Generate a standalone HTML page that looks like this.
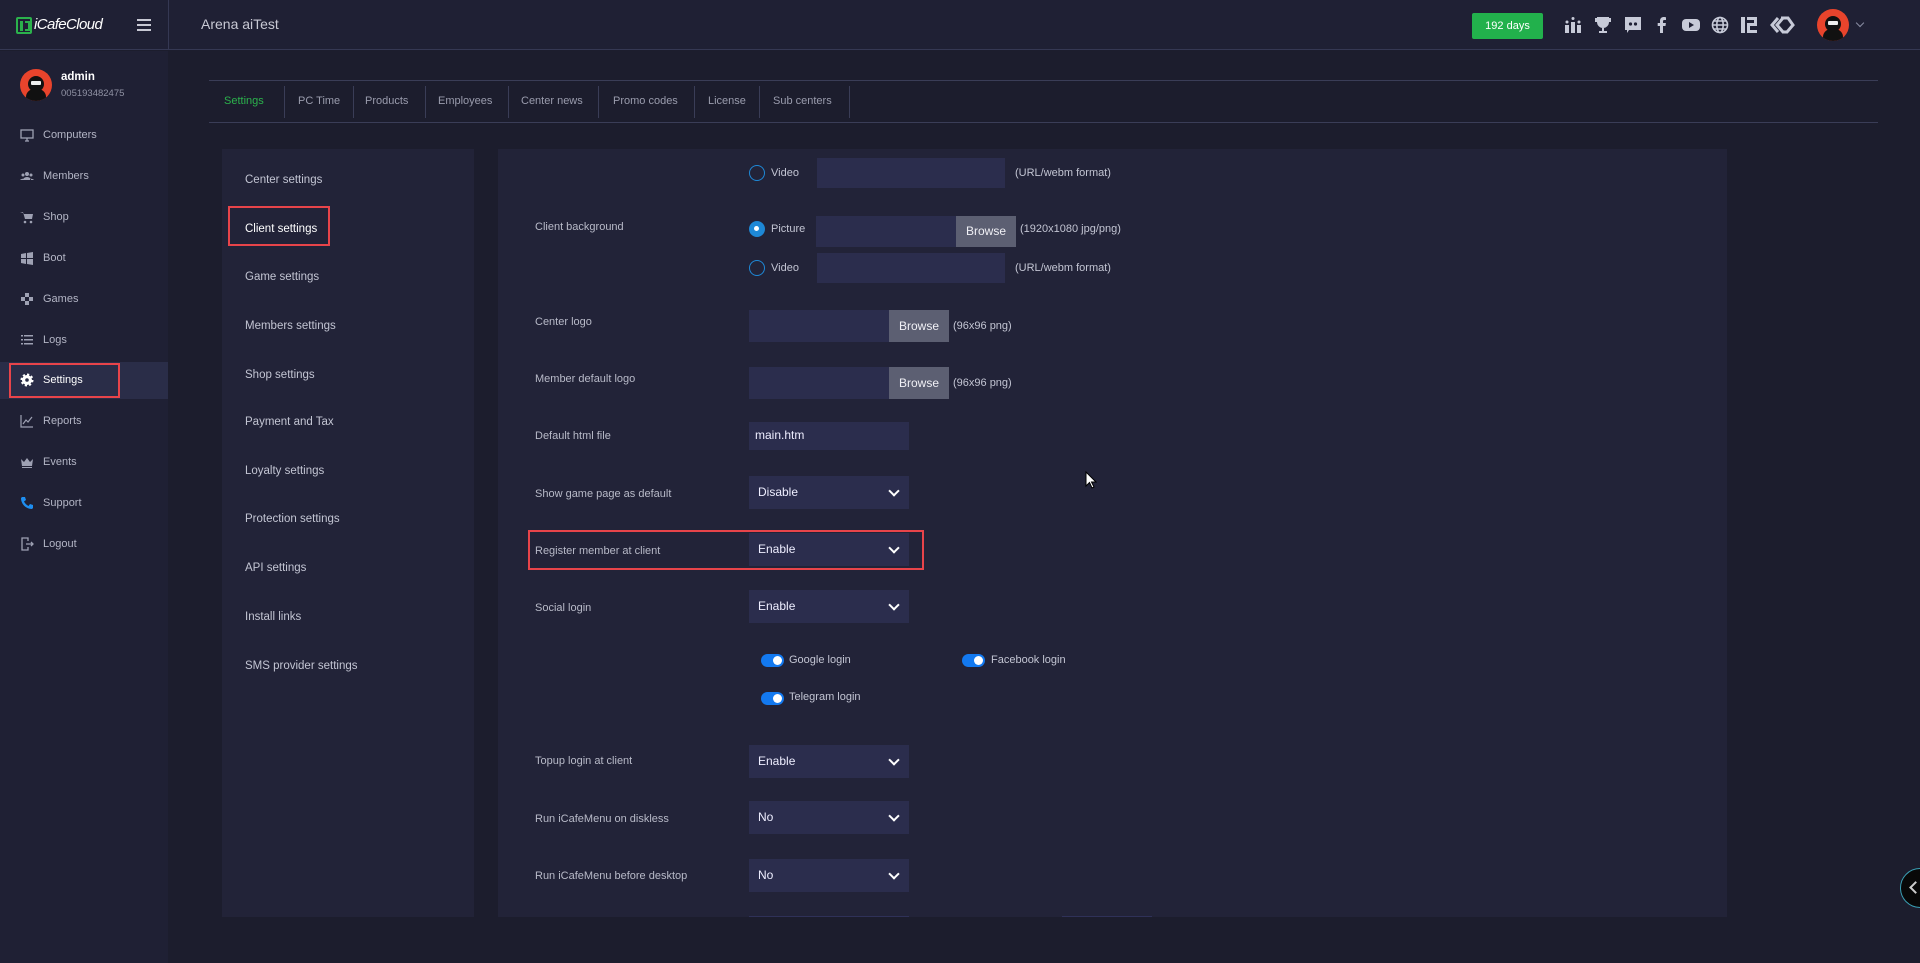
<!DOCTYPE html>
<html><head><meta charset="utf-8"><style>
*{box-sizing:border-box;margin:0;padding:0}
body{width:1920px;height:963px;background:#1c1d2d;font-family:"Liberation Sans",sans-serif;color:#c9cad6;position:relative;overflow:hidden;font-size:11px}
.a{position:absolute;white-space:nowrap}
.hdr{left:0;top:0;width:1920px;height:50px;background:#1f2034;border-bottom:1px solid #353853}
.side{left:0;top:51px;width:168px;height:912px;background:#1f2034}
.mi{left:20px;font-size:11px;color:#b3b5c5;display:flex;align-items:center;gap:9px;transform:translateY(-50%)}
.mi svg{width:14px;height:14px}
.tab{top:95px;font-size:11px;color:#9a9cad}
.sep{top:86px;width:1px;height:32px;background:#3a3d57}
.panel{background:#222338}
.li{left:245px;font-size:11.5px;color:#c3c5d3;transform:translateY(-50%)}
.lb{left:535px;font-size:11px;color:#b8bac8;transform:translateY(-50%)}
.inp{background:#2b2d4d;height:30px}
.sel{left:749px;width:160px;height:33px;background:#2b2d4d;color:#eef;font-size:12px;padding:0 0 0 9px;line-height:33px}
.sel:after{content:"";position:absolute;right:11px;top:11px;width:6px;height:6px;border-right:2px solid #fff;border-bottom:2px solid #fff;transform:rotate(45deg)}
.br{background:#5c5f72;color:#f0f0f5;font-size:12px;text-align:center;line-height:30px}
.rad{width:16px;height:16px;border-radius:50%;border:1.5px solid #1e88d6}
.tg{width:23px;height:13px;border-radius:7px;background:#1379f0}
.tg:after{content:"";position:absolute;right:2px;top:2px;width:9px;height:9px;border-radius:50%;background:#fff}
.tt{font-size:11px;color:#c3c5d3;transform:translateY(-50%)}
.ic{top:16px;width:18px;height:18px}
</style></head><body>
<div class="a hdr"></div>
<div class="a" style="left:168px;top:0;width:1px;height:50px;background:#353853"></div>
<div class="a" style="left:16px;top:17px;width:16px;height:17px;border:2px solid #2bb24c;border-radius:2px"></div>
<div class="a" style="left:20px;top:21px;width:3px;height:10px;background:#2bb24c"></div>
<div class="a" style="left:25px;top:21px;width:5px;height:10px;border:2px solid #2bb24c;border-left:none"></div>
<div class="a" style="left:34px;top:16px;font-size:15px;color:#fff;letter-spacing:-0.6px;font-style:italic">iCafeCloud</div>
<div class="a" style="left:137px;top:19px;width:14px;height:2px;background:#c8c9d4;box-shadow:0 5px 0 #c8c9d4,0 10px 0 #c8c9d4"></div>
<div class="a" style="left:201px;top:16px;font-size:14px;color:#c8c9d4">Arena aiTest</div>
<div class="a" style="left:1472px;top:13px;width:71px;height:26px;background:#22b14c;border-radius:2px;color:#fff;font-size:11px;text-align:center;line-height:26px">192 days</div>
<svg class="a ic" style="left:1564px" viewBox="0 0 18 18" fill="#c7cad8"><rect x="1" y="9" width="4" height="8"/><rect x="7" y="6" width="4" height="11"/><rect x="13" y="9" width="4" height="8"/><circle cx="3" cy="6" r="1.5"/><circle cx="9" cy="2.5" r="1.5"/><circle cx="15" cy="6" r="1.5"/></svg>
<svg class="a ic" style="left:1594px" viewBox="0 0 18 18" fill="#c7cad8"><path d="M3 1h12v5a6 6 0 0 1-12 0z M1 2h2v4H1z M15 2h2v4h-2z M8 11h2v4H8z M5 15h8v2H5z"/></svg>
<svg class="a ic" style="left:1624px" viewBox="0 0 18 18"><path d="M1 1h16v13H5l-2 3v-3H1z" fill="#c7cad8"/><circle cx="6.5" cy="8" r="1.6" fill="#1f2034"/><circle cx="11.5" cy="8" r="1.6" fill="#1f2034"/></svg>
<svg class="a ic" style="left:1653px" viewBox="0 0 18 18" fill="#c7cad8"><path d="M10 17V10h2.5l.4-3H10V5.3c0-.8.3-1.3 1.4-1.3H13V1.3C12.6 1.2 11.8 1 10.9 1 8.6 1 7 2.3 7 4.9V7H4.7v3H7v7z"/></svg>
<svg class="a ic" style="left:1682px" viewBox="0 0 18 18"><rect x="0" y="3" width="18" height="12" rx="4" fill="#c7cad8"/><path d="M7 6l5 3-5 3z" fill="#1f2034"/></svg>
<svg class="a ic" style="left:1711px" viewBox="0 0 18 18" fill="none" stroke="#c7cad8" stroke-width="1.6"><circle cx="9" cy="9" r="7.5"/><ellipse cx="9" cy="9" rx="3.2" ry="7.5"/><path d="M1.5 9h15M3 5h12M3 13h12"/></svg>
<svg class="a ic" style="left:1740px" viewBox="0 0 18 18" fill="#c7cad8"><rect x="1" y="1" width="4" height="16"/><path d="M7 1h10v9H10v4h7v3H7v-10h7V4H7z"/></svg>
<svg class="a" style="left:1769px;top:15px;width:26px;height:20px" viewBox="0 0 26 20" fill="none" stroke="#c7cad8" stroke-width="3"><path d="M9 3L3 10l6 7M14 3l-6 7 6 7M12 3h7l5 7-6 7h-5"/></svg>
<div class="a" style="left:1817px;top:9px;width:32px;height:32px;border-radius:50%;background:#e8442c;overflow:hidden"><div style="position:absolute;left:8px;top:7px;width:16px;height:16px;border-radius:50%;background:#111"></div><div style="position:absolute;left:11px;top:12px;width:10px;height:4px;background:#eee;border-radius:1px"></div><div style="position:absolute;left:6px;top:20px;width:20px;height:14px;border-radius:8px 8px 0 0;background:#111"></div></div>
<div class="a" style="left:1857px;top:20px;width:6px;height:6px;border-right:1.5px solid #8a8da3;border-bottom:1.5px solid #8a8da3;transform:rotate(45deg)"></div>

<div class="a side"></div>
<div class="a" style="left:20px;top:69px;width:32px;height:32px;border-radius:50%;background:#e8442c;overflow:hidden"><div style="position:absolute;left:8px;top:7px;width:16px;height:16px;border-radius:50%;background:#111"></div><div style="position:absolute;left:11px;top:12px;width:10px;height:4px;background:#eee;border-radius:1px"></div><div style="position:absolute;left:6px;top:20px;width:20px;height:14px;border-radius:8px 8px 0 0;background:#111"></div></div>
<div class="a" style="left:61px;top:71px;font-size:11.5px;font-weight:bold;color:#fff">admin</div>
<div class="a" style="left:61px;top:88px;font-size:9.5px;color:#9092a4">005193482475</div>
<div class="a" style="left:0;top:362px;width:168px;height:37px;background:#2a2d48"></div>
<div class="a" style="left:9px;top:363px;width:111px;height:35px;border:2px solid #e8444a"></div>
<div class="a mi" style="top:135px"><svg viewBox="0 0 14 14" fill="none" stroke="#9ea1b3" stroke-width="1.3"><rect x="1" y="2" width="12" height="8"/><path d="M5 13h4M7 10v3"/></svg>Computers</div>
<div class="a mi" style="top:176px"><svg viewBox="0 0 14 14" fill="#9ea1b3"><circle cx="7" cy="5" r="2"/><circle cx="3" cy="6" r="1.5"/><circle cx="11" cy="6" r="1.5"/><path d="M3 11a4 3 0 0 1 8 0zM0 11a3 2 0 0 1 4-1v1zM14 11a3 2 0 0 0-4-1v1z"/></svg>Members</div>
<div class="a mi" style="top:217px"><svg viewBox="0 0 14 14" fill="#9ea1b3"><path d="M0 2h3l2 7h7l1-5H4L3.5 3"/><circle cx="5" cy="12" r="1.3"/><circle cx="11" cy="12" r="1.3"/></svg>Shop</div>
<div class="a mi" style="top:258px"><svg viewBox="0 0 14 14" fill="#9ea1b3"><path d="M1 3l5-1v5H1zM7 2l6-1v6H7zM1 8h5v5l-5-1zM7 8h6v6l-6-1z"/></svg>Boot</div>
<div class="a mi" style="top:299px"><svg viewBox="0 0 14 14" fill="#9ea1b3"><rect x="5" y="1" width="4" height="4"/><rect x="5" y="9" width="4" height="4"/><rect x="1" y="5" width="4" height="4"/><rect x="9" y="5" width="4" height="4"/></svg>Games</div>
<div class="a mi" style="top:340px"><svg viewBox="0 0 14 14" fill="#9ea1b3"><rect x="1" y="2" width="2" height="1.5"/><rect x="4" y="2" width="9" height="1.5"/><rect x="1" y="6" width="2" height="1.5"/><rect x="4" y="6" width="9" height="1.5"/><rect x="1" y="10" width="2" height="1.5"/><rect x="4" y="10" width="9" height="1.5"/></svg>Logs</div>
<div class="a mi" style="top:380px;color:#fff"><svg viewBox="0 0 14 14"><circle cx="7" cy="7" r="5" fill="#fff" stroke="#fff" stroke-width="3" stroke-dasharray="2 1.9"/><circle cx="7" cy="7" r="1.8" fill="#2a2d48"/></svg>Settings</div>
<div class="a mi" style="top:421px"><svg viewBox="0 0 14 14" fill="none" stroke="#9ea1b3" stroke-width="1.2"><path d="M1 1v12h12M3 10l3-4 2 2 4-5"/></svg>Reports</div>
<div class="a mi" style="top:462px"><svg viewBox="0 0 14 14" fill="#9ea1b3"><path d="M1 4l3 3 3-4 3 4 3-3-1 7H2zM2 12h10v1H2z"/></svg>Events</div>
<div class="a mi" style="top:503px"><svg viewBox="0 0 14 14" fill="#1e8ef0"><path d="M2 1l3 0 1 3-2 1.5c1 2 2.5 3.5 4.5 4.5L10 8l3 1v3l-1 1C6 13 1 8 1 2z"/></svg>Support</div>
<div class="a mi" style="top:544px"><svg viewBox="0 0 14 14" fill="none" stroke="#9ea1b3" stroke-width="1.3"><path d="M8 4V1H2v12h6v-3M6 7h7M11 5l2 2-2 2"/></svg>Logout</div>

<div class="a" style="left:209px;top:80px;width:1669px;height:1px;background:#3a3d57"></div>
<div class="a" style="left:209px;top:122px;width:1669px;height:1px;background:#3a3d57"></div>
<div class="a tab" style="left:224px;color:#2bb24c">Settings</div>
<div class="a tab" style="left:298px">PC Time</div>
<div class="a tab" style="left:365px">Products</div>
<div class="a tab" style="left:438px">Employees</div>
<div class="a tab" style="left:521px">Center news</div>
<div class="a tab" style="left:613px">Promo codes</div>
<div class="a tab" style="left:708px">License</div>
<div class="a tab" style="left:773px">Sub centers</div>
<div class="a sep" style="left:284px"></div><div class="a sep" style="left:353px"></div><div class="a sep" style="left:425px"></div><div class="a sep" style="left:508px"></div><div class="a sep" style="left:598px"></div><div class="a sep" style="left:694px"></div><div class="a sep" style="left:759px"></div><div class="a sep" style="left:849px"></div>

<div class="a panel" style="left:222px;top:149px;width:252px;height:768px"></div>
<div class="a li" style="top:180px">Center settings</div>
<div class="a" style="left:228px;top:206px;width:102px;height:40px;border:2px solid #e8444a"></div>
<div class="a li" style="top:229px;color:#fff">Client settings</div>
<div class="a li" style="top:277px">Game settings</div>
<div class="a li" style="top:326px">Members settings</div>
<div class="a li" style="top:375px">Shop settings</div>
<div class="a li" style="top:422px">Payment and Tax</div>
<div class="a li" style="top:471px">Loyalty settings</div>
<div class="a li" style="top:519px">Protection settings</div>
<div class="a li" style="top:568px">API settings</div>
<div class="a li" style="top:617px">Install links</div>
<div class="a li" style="top:666px">SMS provider settings</div>

<div class="a panel" style="left:498px;top:149px;width:1229px;height:768px"></div>
<div class="a rad" style="left:749px;top:165px"></div>
<div class="a tt" style="left:771px;top:173px">Video</div>
<div class="a inp" style="left:817px;top:158px;width:188px;height:30px"></div>
<div class="a tt" style="left:1015px;top:173px">(URL/webm format)</div>
<div class="a lb" style="top:227px">Client background</div>
<div class="a rad" style="left:749px;top:221px;background:#1e88d6"><div style="position:absolute;left:4px;top:4px;width:5px;height:5px;border-radius:50%;background:#fff"></div></div>
<div class="a tt" style="left:771px;top:229px">Picture</div>
<div class="a inp" style="left:816px;top:216px;width:141px;height:31px"></div>
<div class="a br" style="left:956px;top:216px;width:60px;height:31px">Browse</div>
<div class="a tt" style="left:1020px;top:229px">(1920x1080 jpg/png)</div>
<div class="a rad" style="left:749px;top:260px"></div>
<div class="a tt" style="left:771px;top:268px">Video</div>
<div class="a inp" style="left:817px;top:253px;width:188px;height:30px"></div>
<div class="a tt" style="left:1015px;top:268px">(URL/webm format)</div>
<div class="a lb" style="top:322px">Center logo</div>
<div class="a inp" style="left:749px;top:310px;width:141px;height:32px"></div>
<div class="a br" style="left:889px;top:310px;width:60px;height:32px;line-height:32px">Browse</div>
<div class="a tt" style="left:953px;top:326px">(96x96 png)</div>
<div class="a lb" style="top:379px">Member default logo</div>
<div class="a inp" style="left:749px;top:367px;width:141px;height:32px"></div>
<div class="a br" style="left:889px;top:367px;width:60px;height:32px;line-height:32px">Browse</div>
<div class="a tt" style="left:953px;top:383px">(96x96 png)</div>
<div class="a lb" style="top:436px">Default html file</div>
<div class="a inp" style="left:749px;top:422px;width:160px;height:28px;color:#eef;font-size:12px;padding-left:6px;line-height:26px">main.htm</div>
<div class="a lb" style="top:494px">Show game page as default</div>
<div class="a sel" style="top:476px">Disable</div>
<div class="a" style="left:528px;top:530px;width:396px;height:40px;border:2px solid #e8444a"></div>
<div class="a lb" style="top:551px">Register member at client</div>
<div class="a sel" style="top:533px">Enable</div>
<div class="a lb" style="top:608px">Social login</div>
<div class="a sel" style="top:590px">Enable</div>
<div class="a tg" style="left:761px;top:654px"></div>
<div class="a tt" style="left:789px;top:660px">Google login</div>
<div class="a tg" style="left:962px;top:654px"></div>
<div class="a tt" style="left:991px;top:660px">Facebook login</div>
<div class="a tg" style="left:761px;top:692px"></div>
<div class="a tt" style="left:789px;top:697px">Telegram login</div>
<div class="a lb" style="top:761px">Topup login at client</div>
<div class="a sel" style="top:745px">Enable</div>
<div class="a lb" style="top:819px">Run iCafeMenu on diskless</div>
<div class="a sel" style="top:801px">No</div>
<div class="a lb" style="top:876px">Run iCafeMenu before desktop</div>
<div class="a sel" style="top:859px">No</div>
<div class="a" style="left:749px;top:916px;width:160px;height:1px;background:#2f3158"></div>
<div class="a" style="left:1062px;top:916px;width:90px;height:1px;background:#2f3158"></div>
<svg class="a" style="left:1085px;top:471px" width="12" height="18" viewBox="0 0 12 18"><path d="M1 1v14l3.5-3.5 2.5 5.5 2-1-2.5-5H11z" fill="#fff" stroke="#000" stroke-width="1"/></svg>
<div class="a" style="left:1900px;top:868px;width:40px;height:40px;border-radius:50%;background:#080808;border:1.5px solid #3aa0b5"></div>
<div class="a" style="left:1911px;top:883px;width:9px;height:9px;border-left:2px solid #ccc;border-bottom:2px solid #ccc;transform:rotate(45deg)"></div>
</body></html>
